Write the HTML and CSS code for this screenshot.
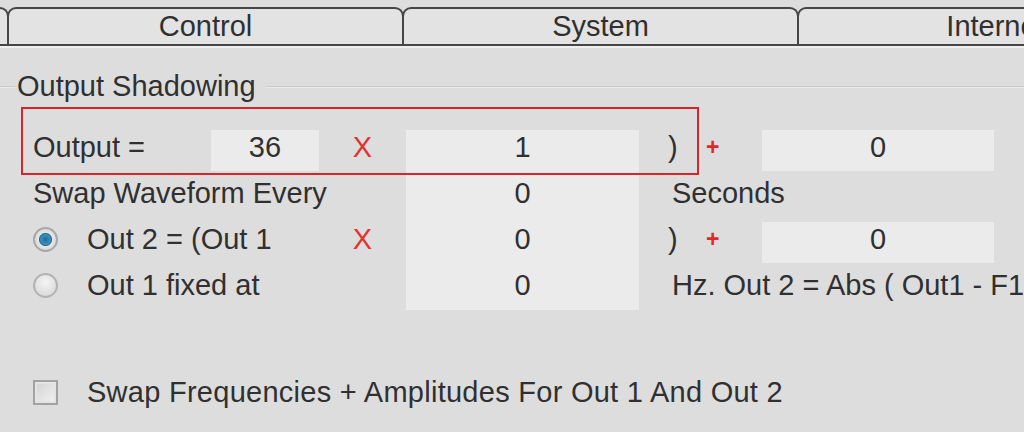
FILE: index.html
```html
<!DOCTYPE html>
<html lang="en">
<head>
  <meta charset="UTF-8">
  <meta name="viewport" content="width=device-width, initial-scale=1.0">
  <title>Output Shadowing</title>
  <link rel="stylesheet" href="styles.css">
</head>
<body>
  <div class="tabs">
    <div class="tab"></div>
    <div class="tab">Control</div>
    <div class="tab">System</div>
    <div class="tab">Internet</div>
  </div>

  <div class="group">
    <div class="group-title">
      <span class="rule rule-short"></span>
      <span class="group-name">Output Shadowing</span>
      <span class="rule"></span>
    </div>

    <div class="formula">
      <!-- row 1 -->
      <div class="cell">Output =</div>
      <div class="cell field">36</div>
      <div class="cell op">X</div>
      <div class="cell field mid">1</div>
      <div class="cell paren">)</div>
      <div class="cell plus">+</div>
      <div class="cell field">0</div>

      <!-- row 2 -->
      <div class="cell span-3">Swap Waveform Every</div>
      <div class="cell field mid">0</div>
      <div class="cell span-3 note">Seconds</div>

      <!-- row 3 -->
      <div class="cell span-2 choice"><span class="radio checked"></span>Out 2 = (Out 1</div>
      <div class="cell op">X</div>
      <div class="cell field mid">0</div>
      <div class="cell paren">)</div>
      <div class="cell plus">+</div>
      <div class="cell field">0</div>

      <!-- row 4 -->
      <div class="cell span-3 choice"><span class="radio"></span>Out 1 fixed at</div>
      <div class="cell field mid last">0</div>
      <div class="cell span-3 note">Hz. Out 2 = Abs ( Out1 - F1 )</div>

      <div class="highlight"></div>
    </div>

    <div class="check-row">
      <span class="checkbox"></span>
      Swap Frequencies + Amplitudes For Out 1 And Out 2
    </div>
  </div>
</body>
</html>
```

FILE: styles.css
```css
html, body {
  margin: 0;
  padding: 0;
}
body {
  width: 1024px;
  height: 432px;
  overflow: hidden;
  background: #dddddd;
  font-family: "Liberation Sans", Arial, sans-serif;
  font-size: 29px;
  color: #303030;
}

/* tab strip */
.tabs {
  display: flex;
  padding-top: 7px;
  margin-left: -386px;
  border-bottom: 2px solid #464646;
  box-shadow: 0 2px 0 #efefef;
}
.tab {
  box-sizing: border-box;
  flex: 0 0 397px;
  height: 37px;
  line-height: 35px;
  text-align: center;
  background: #e3e3e3;
  border: 2px solid #464646;
  border-bottom: none;
  border-radius: 9px 9px 0 0;
  margin-left: -2px;
  white-space: nowrap;
}

/* group box */
.group-title {
  display: flex;
  align-items: center;
  height: 36px;
  margin-top: 22px;
  margin-bottom: 26px;
}
.group-name {
  line-height: 36px;
  padding: 0 10px 0 2px;
  white-space: nowrap;
}
.rule {
  flex: 1;
  height: 1px;
  background: #c9c9c9;
  box-shadow: 0 1px 0 #e9e9e9;
}
.rule.rule-short {
  flex: 0 0 15px;
}

.formula {
  position: relative;
  display: grid;
  grid-template-columns: 178px 108px 87px 233px 61px 62px 232px;
  grid-auto-rows: 46px;
  margin-left: 33px;
  width: 961px;
}
.cell {
  line-height: 35px;
  white-space: nowrap;
}
.span-2 { grid-column: span 2; }
.span-3 { grid-column: span 3; }

.field {
  height: 41px;
  background: #ebebeb;
  text-align: center;
}
.field.mid {
  height: 46px;
}
.field.mid.last {
  height: 42px;
}
.op {
  color: #e03434;
  text-align: center;
}
.paren {
  padding-left: 29px;
}
.plus {
  color: #e02828;
  font-size: 23px;
  font-weight: bold;
  padding-left: 6px;
}
.note {
  padding-left: 33px;
}

.choice {
  display: flex;
  align-items: flex-start;
}
.radio {
  box-sizing: border-box;
  flex: 0 0 25px;
  height: 25px;
  margin: 5px 29px 0 0;
  border-radius: 50%;
  border: 2px solid #b3b3b3;
  background: radial-gradient(circle at 50% 35%, #f4f4f4, #d4d4d4);
}
.radio.checked {
  border-color: #a8a8a8;
  background: radial-gradient(circle, #1e6f9c 0, #3a8fbd 5px, #1f6589 6px, #e6e6e6 7px, #cfcfcf 100%);
}

.highlight {
  position: absolute;
  top: -23px;
  left: -12px;
  width: 674px;
  height: 64px;
  border: 2px solid #d8252c;
}

.check-row {
  display: flex;
  align-items: center;
  margin: 61px 0 0 33px;
  height: 35px;
  white-space: nowrap;
  letter-spacing: 0.27px;
}
.checkbox {
  box-sizing: border-box;
  width: 25px;
  height: 25px;
  margin-right: 29px;
  border: 2px solid #a2a2a2;
  background: linear-gradient(135deg, #d2d2d2, #f2f2f2);
  box-shadow: inset 0 0 0 2px #e4e4e4;
}
```
